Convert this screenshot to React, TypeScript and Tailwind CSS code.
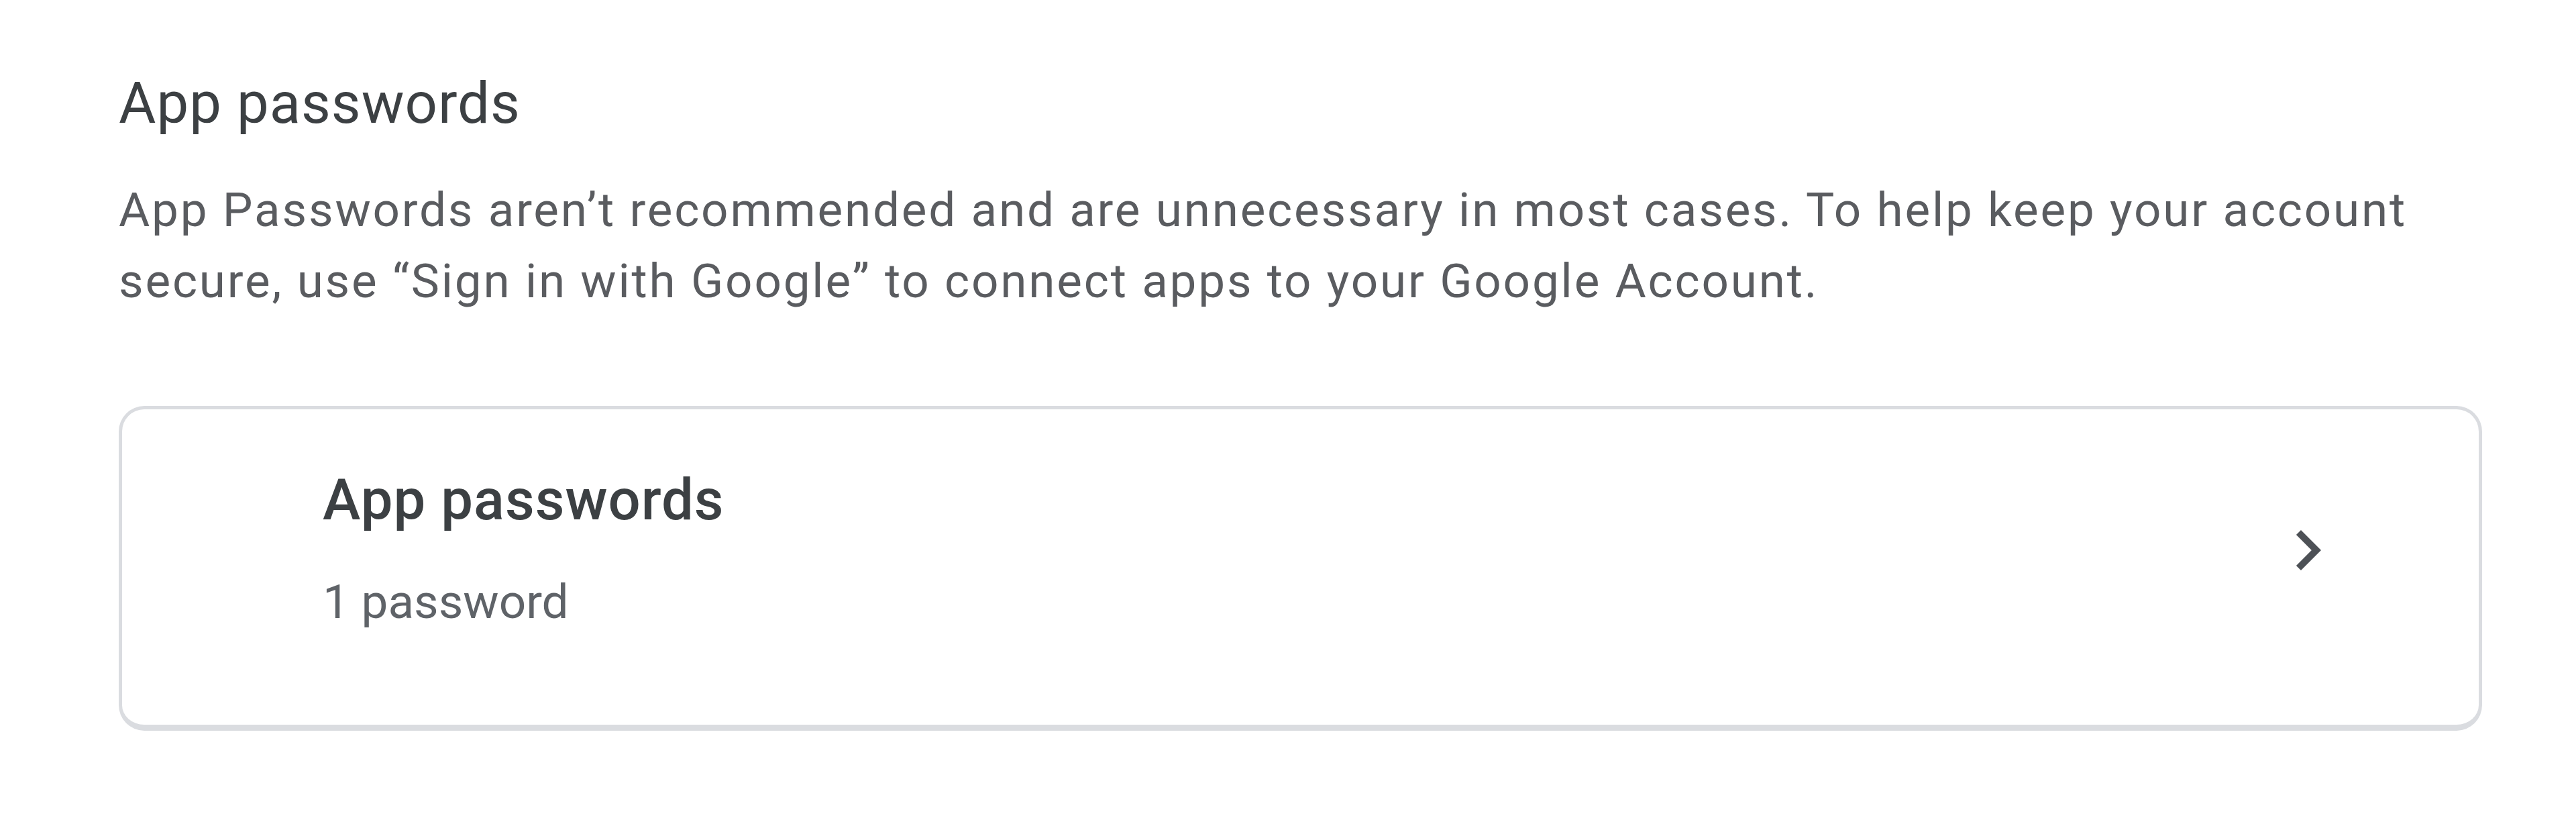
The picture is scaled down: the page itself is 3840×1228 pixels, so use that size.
export default function App() {
  return (
    <div className="min-h-screen bg-white pl-[177px] pt-[98px] font-['Roboto','Liberation_Sans',sans-serif]">
      <div className="w-[3523px]">
        <h2 className="text-[85px] leading-[113px] font-normal tracking-[1px] text-[#3c4043]">App passwords</h2>
        <p className="mt-[49px] text-[71px] leading-[106px] tracking-[2.8px] text-[#5a5c60]">
          App Passwords aren’t recommended and are unnecessary in most cases. To help keep your account secure, use
          “Sign in with Google” to connect apps to your Google Account.
        </p>
        <div className="mt-[133px] flex items-center rounded-[38px] border-[5px] border-b-[9px] border-[#dadce0] bg-white pb-[130px] pl-[299px] pr-[195px] pt-[79px]">
          <div className="flex-1">
            <div className="text-[85px] leading-[113px] font-medium tracking-[1px] text-[#3c4043]">App passwords</div>
            <div className="mt-[42px] text-[71px] leading-[106px] text-[#5f6368]">1 password</div>
          </div>
          <svg viewBox="0 0 24 24" className="h-[120px] w-[120px] fill-[#4d5156]">
            <path d="M10 6L8.59 7.41 13.17 12l-4.58 4.59L10 18l6-6z" />
          </svg>
        </div>
      </div>
    </div>
  )
}
